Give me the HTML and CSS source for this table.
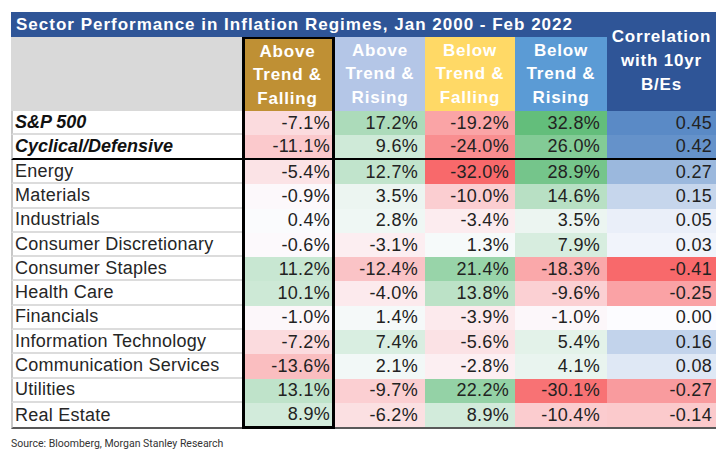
FILE: index.html
```html
<!DOCTYPE html>
<html lang="en">
<head>
<meta charset="utf-8">
<title>Sector Performance in Inflation Regimes</title>
<link rel="stylesheet" href="styles.css">
</head>
<body>
<main class="sheet">
  <div class="grid">
    <div class="title">Sector Performance in Inflation Regimes, Jan 2000 - Feb 2022</div>
    <div class="corr-head">Correlation<br>with 10yr<br>B/Es</div>
    <div class="blank-head"></div>
    <div class="head h1 c1">Above<br>Trend &amp;<br>Falling</div>
    <div class="head h2">Above<br>Trend &amp;<br>Rising</div>
    <div class="head h3">Below<br>Trend &amp;<br>Falling</div>
    <div class="head h4">Below<br>Trend &amp;<br>Rising</div>

    <div class="row strong">
      <div class="label">S&amp;P 500</div>
      <div class="num c1" data-v="-7.1">-7.1%</div>
      <div class="num n2" data-v="17.2">17.2%</div>
      <div class="num n3" data-v="-19.2">-19.2%</div>
      <div class="num n4" data-v="32.8">32.8%</div>
      <div class="num corr" data-c="0.45">0.45</div>
    </div>
    <div class="row strong sep">
      <div class="label">Cyclical/Defensive</div>
      <div class="num c1" data-v="-11.1">-11.1%</div>
      <div class="num n2" data-v="9.6">9.6%</div>
      <div class="num n3" data-v="-24.0">-24.0%</div>
      <div class="num n4" data-v="26.0">26.0%</div>
      <div class="num corr" data-c="0.42">0.42</div>
    </div>
    <div class="row">
      <div class="label">Energy</div>
      <div class="num c1" data-v="-5.4">-5.4%</div>
      <div class="num n2" data-v="12.7">12.7%</div>
      <div class="num n3" data-v="-32.0">-32.0%</div>
      <div class="num n4" data-v="28.9">28.9%</div>
      <div class="num corr" data-c="0.27">0.27</div>
    </div>
    <div class="row">
      <div class="label">Materials</div>
      <div class="num c1" data-v="-0.9">-0.9%</div>
      <div class="num n2" data-v="3.5">3.5%</div>
      <div class="num n3" data-v="-10.0">-10.0%</div>
      <div class="num n4" data-v="14.6">14.6%</div>
      <div class="num corr" data-c="0.15">0.15</div>
    </div>
    <div class="row">
      <div class="label">Industrials</div>
      <div class="num c1" data-v="0.4">0.4%</div>
      <div class="num n2" data-v="2.8">2.8%</div>
      <div class="num n3" data-v="-3.4">-3.4%</div>
      <div class="num n4" data-v="3.5">3.5%</div>
      <div class="num corr" data-c="0.05">0.05</div>
    </div>
    <div class="row">
      <div class="label">Consumer Discretionary</div>
      <div class="num c1" data-v="-0.6">-0.6%</div>
      <div class="num n2" data-v="-3.1">-3.1%</div>
      <div class="num n3" data-v="1.3">1.3%</div>
      <div class="num n4" data-v="7.9">7.9%</div>
      <div class="num corr" data-c="0.03">0.03</div>
    </div>
    <div class="row">
      <div class="label">Consumer Staples</div>
      <div class="num c1" data-v="11.2">11.2%</div>
      <div class="num n2" data-v="-12.4">-12.4%</div>
      <div class="num n3" data-v="21.4">21.4%</div>
      <div class="num n4" data-v="-18.3">-18.3%</div>
      <div class="num corr" data-c="-0.41">-0.41</div>
    </div>
    <div class="row">
      <div class="label">Health Care</div>
      <div class="num c1" data-v="10.1">10.1%</div>
      <div class="num n2" data-v="-4.0">-4.0%</div>
      <div class="num n3" data-v="13.8">13.8%</div>
      <div class="num n4" data-v="-9.6">-9.6%</div>
      <div class="num corr" data-c="-0.25">-0.25</div>
    </div>
    <div class="row">
      <div class="label">Financials</div>
      <div class="num c1" data-v="-1.0">-1.0%</div>
      <div class="num n2" data-v="1.4">1.4%</div>
      <div class="num n3" data-v="-3.9">-3.9%</div>
      <div class="num n4" data-v="-1.0">-1.0%</div>
      <div class="num corr" data-c="0.00">0.00</div>
    </div>
    <div class="row">
      <div class="label">Information Technology</div>
      <div class="num c1" data-v="-7.2">-7.2%</div>
      <div class="num n2" data-v="7.4">7.4%</div>
      <div class="num n3" data-v="-5.6">-5.6%</div>
      <div class="num n4" data-v="5.4">5.4%</div>
      <div class="num corr" data-c="0.16">0.16</div>
    </div>
    <div class="row">
      <div class="label">Communication Services</div>
      <div class="num c1" data-v="-13.6">-13.6%</div>
      <div class="num n2" data-v="2.1">2.1%</div>
      <div class="num n3" data-v="-2.8">-2.8%</div>
      <div class="num n4" data-v="4.1">4.1%</div>
      <div class="num corr" data-c="0.08">0.08</div>
    </div>
    <div class="row">
      <div class="label">Utilities</div>
      <div class="num c1" data-v="13.1">13.1%</div>
      <div class="num n2" data-v="-9.7">-9.7%</div>
      <div class="num n3" data-v="22.2">22.2%</div>
      <div class="num n4" data-v="-30.1">-30.1%</div>
      <div class="num corr" data-c="-0.27">-0.27</div>
    </div>
    <div class="row last">
      <div class="label">Real Estate</div>
      <div class="num c1" data-v="8.9">8.9%</div>
      <div class="num n2" data-v="-6.2">-6.2%</div>
      <div class="num n3" data-v="8.9">8.9%</div>
      <div class="num n4" data-v="-10.4">-10.4%</div>
      <div class="num corr" data-c="-0.14">-0.14</div>
    </div>
  </div>
  <p class="source">Source: Bloomberg, Morgan Stanley Research</p>
</main>
<script src="app.js"></script>
</body>
</html>
```

FILE: styles.css
```css
* { box-sizing: border-box; margin: 0; padding: 0; }

body {
  background: #ffffff;
  font-family: "Liberation Sans", Arial, sans-serif;
  color: #222222;
}

.sheet {
  width: 724px;
  padding: 12px 0 0 11px;
}

.grid {
  display: grid;
  width: 705px;
  grid-template-columns: 231px 93px 90px 90px 92px 109px;
  grid-template-rows: 25px 74px 24px 25px repeat(10, 24.3px) 26.3px;
}

.title {
  grid-column: 1 / 6;
  grid-row: 1;
  background: #2f5597;
  color: #ffffff;
  font-weight: 700;
  font-size: 17px;
  letter-spacing: 1px;
  padding-left: 5px;
  display: flex;
  align-items: center;
  white-space: nowrap;
}

.corr-head {
  grid-column: 6;
  grid-row: 1 / 3;
  background: #2f5597;
  color: #ffffff;
  font-weight: 700;
  font-size: 17px;
  letter-spacing: 0.8px;
  line-height: 24px;
  text-align: center;
  display: flex;
  align-items: center;
  justify-content: center;
  padding-bottom: 1px;
}

.blank-head {
  grid-column: 1;
  grid-row: 2;
  background: #d9d9d9;
}

.head {
  grid-row: 2;
  color: #ffffff;
  font-weight: 700;
  font-size: 17px;
  letter-spacing: 0.8px;
  line-height: 23.5px;
  text-align: center;
  display: flex;
  align-items: center;
  justify-content: center;
}

.h1 { background: #bf9034; border-top: 2px solid #000000; }
.h2 { background: #b4c6e7; }
.h3 { background: #ffd966; }
.h4 { background: #5b9bd5; }

.row { display: contents; }

.label {
  display: flex;
  align-items: center;
  padding-left: 2px;
  font-size: 18px;
  letter-spacing: 0.25px;
  color: #262626;
  background: #ffffff;
  border-left: 2px solid #c8c8c8;
  border-bottom: 2px solid #dcdcdc;
  white-space: nowrap;
}

.strong .label {
  font-weight: 700;
  font-style: italic;
  letter-spacing: 0;
  color: #111111;
}

.num {
  display: flex;
  align-items: center;
  justify-content: flex-end;
  font-size: 18px;
  letter-spacing: 0.3px;
  color: #222222;
  padding-right: 7px;
  background: #fcfcff;
}

.c1 {
  border-left: 3px solid #000000;
  border-right: 3px solid #000000;
  padding-right: 2px;
}

.n3 { padding-right: 6px; }
.corr { padding-right: 4px; }

.sep > div { border-bottom: 2px solid #000000; }
.last > div { border-bottom: 2px solid #595959; }
.last > .c1 { border-bottom: 3px solid #000000; }

.source {
  margin-top: 8px;
  font-family: Roboto, "Liberation Sans", Arial, sans-serif;
  font-size: 10.5px;
  line-height: 13px;
  color: #333333;
}
```

FILE: app.js
```js
(function () {
  var white = [252, 252, 255];
  var red = [248, 105, 107];
  var green = [99, 190, 123];
  var blue = [90, 138, 198];

  function mix(a, b, t) {
    return 'rgb(' + a.map(function (x, i) {
      return Math.round(x + (b[i] - x) * t);
    }).join(',') + ')';
  }

  document.querySelectorAll('[data-v]').forEach(function (el) {
    var v = parseFloat(el.getAttribute('data-v'));
    el.style.background = v < 0 ? mix(white, red, Math.min(1, -v / 32.0))
                                : mix(white, green, Math.min(1, v / 32.8));
  });

  document.querySelectorAll('[data-c]').forEach(function (el) {
    var v = parseFloat(el.getAttribute('data-c'));
    el.style.background = v < 0 ? mix(white, red, Math.min(1, -v / 0.41))
                                : mix(white, blue, Math.min(1, v / 0.45));
  });
})();
```
